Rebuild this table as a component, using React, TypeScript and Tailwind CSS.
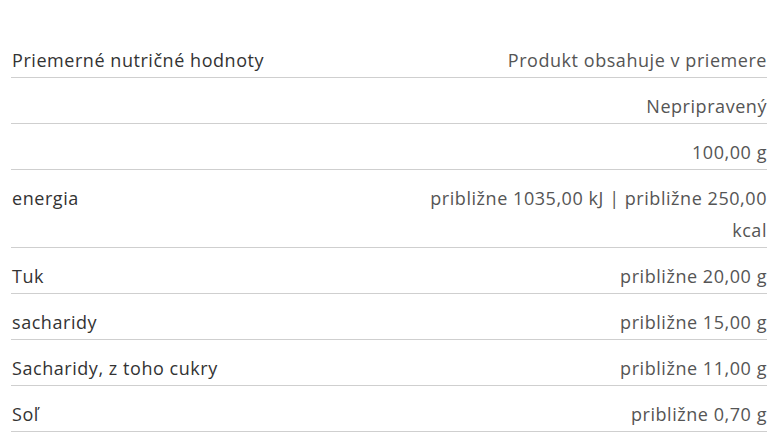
import React from "react";

type Row = { label: string; value: React.ReactNode; head?: boolean };

const rows: Row[] = [
  { label: "Priemerné nutričné hodnoty", value: "Produkt obsahuje v priemere", head: true },
  { label: "", value: "Nepripravený" },
  { label: "", value: "100,00 g" },
  { label: "energia", value: "približne 1035,00 kJ | približne 250,00 kcal" },
  { label: "Tuk", value: "približne 20,00 g" },
  { label: "sacharidy", value: "približne 15,00 g" },
  { label: "Sacharidy, z toho cukry", value: "približne 11,00 g" },
  { label: "Soľ", value: "približne 0,70 g" },
];

export default function App() {
  return (
    <div
      className="w-[781px] h-[446px] bg-white overflow-hidden pt-[32px] pl-[11px] pr-[14px]"
      style={{ fontFamily: '"Open Sans", "Noto Sans", sans-serif' }}
    >
      <div className="flex flex-col">
        {rows.map((r, i) => (
          <div
            key={i}
            className="flex justify-between items-start border-b border-[#cfcfcf] pt-[12px] pb-px text-[18px] leading-[32px] tracking-[0.55px]"
          >
            <div className="pl-px text-[#333333] shrink-0">{r.label}</div>
            <div className="text-right text-[#555555] max-w-[360px]">{r.value}</div>
          </div>
        ))}
      </div>
    </div>
  );
}
